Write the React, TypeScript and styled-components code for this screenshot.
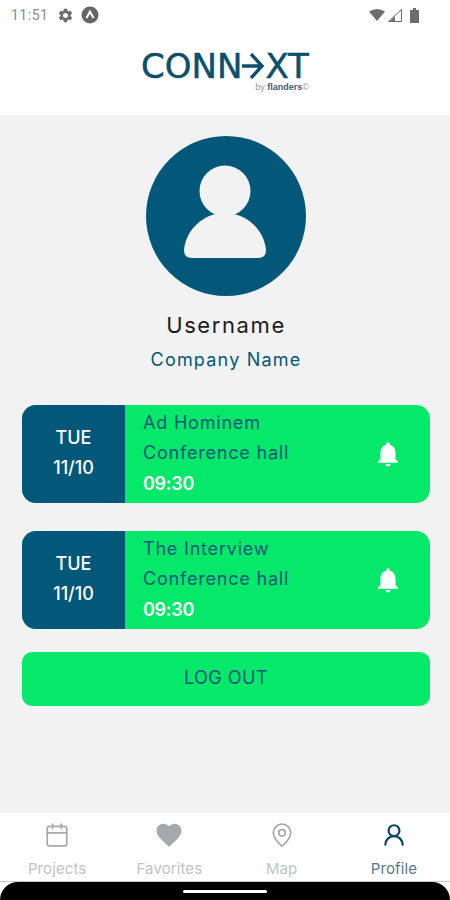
import React from "react";
import styled, { createGlobalStyle } from "styled-components";
import { MdFavorite, MdNotifications, MdSettings } from "react-icons/md";
import { Calendar, MapPin, UserRound } from "lucide-react";

const NAVY = "#03587a";
const GREEN = "#05e869";
const GREY = "#a5a9ab";

const GlobalStyle = createGlobalStyle`
  html, body {
    margin: 0;
    padding: 0;
    background: #fff;
  }
  * {
    box-sizing: border-box;
  }
`;

const Screen = styled.div`
  width: 450px;
  height: 900px;
  display: flex;
  flex-direction: column;
  overflow: hidden;
  background: #fff;
  font-family: Inter, "Open Sans", sans-serif;
`;

const StatusBar = styled.div`
  height: 30px;
  padding: 0 31px 0 11px;
  display: flex;
  align-items: center;
  justify-content: space-between;
  color: #6d6d6d;
`;

const StatusGroup = styled.div<{ $gap: number }>`
  display: flex;
  align-items: center;
  gap: ${(props) => props.$gap}px;
`;

const Clock = styled.span`
  font-family: Roboto, sans-serif;
  font-size: 14px;
  color: #8a8a8a;
  letter-spacing: 0.5px;
  margin-right: 2px;
`;

const WifiIcon = styled.svg`
  margin-right: -5px;
`;

const Header = styled.header`
  height: 85px;
  display: flex;
  flex-direction: column;
  align-items: center;
  padding-top: 21px;
`;

const Logo = styled.div`
  width: 168px;
  display: flex;
  flex-direction: column;
  color: #0a4f6c;
`;

const LogoWord = styled.div`
  display: flex;
  align-items: center;
  height: 30px;
  font-family: "DejaVu Sans", sans-serif;
  font-size: 34px;
  line-height: 30px;
  -webkit-text-stroke: 0.5px #0a4f6c;
`;

const LogoTag = styled.div`
  align-self: flex-end;
  margin-top: 1px;
  font-family: "Liberation Sans", sans-serif;
  font-size: 9px;
  line-height: 10px;
  color: #8a9aa3;

  b {
    color: #3f5d6e;
  }
`;

const Main = styled.main`
  flex: 1;
  background: #f2f2f2;
  padding: 21px 20px 0 22px;
  display: flex;
  flex-direction: column;
`;

const Profile = styled.section`
  display: flex;
  flex-direction: column;
  align-items: center;
  margin-bottom: 33px;
`;

const Avatar = styled.div`
  width: 160px;
  height: 160px;
  border-radius: 50%;
  background: ${NAVY};
  display: flex;
  align-items: center;
  justify-content: center;

  svg {
    margin-bottom: 8px;
  }
`;

const Username = styled.h1`
  margin: 16px 0 0;
  font-size: 22px;
  line-height: 26px;
  font-weight: 400;
  letter-spacing: 1.6px;
  color: #1c1c1c;
`;

const Company = styled.p`
  margin: 10px 0 0;
  font-size: 18px;
  line-height: 24px;
  font-weight: 400;
  letter-spacing: 1.2px;
  color: ${NAVY};
`;

const Card = styled.article`
  height: 98px;
  margin-bottom: 28px;
  border-radius: 14px;
  overflow: hidden;
  background: ${GREEN};
  display: flex;
`;

const DateBox = styled.div`
  width: 103px;
  padding-bottom: 2px;
  background: ${NAVY};
  color: #fff;
  display: flex;
  flex-direction: column;
  align-items: center;
  justify-content: center;
  gap: 8px;
  font-size: 18px;
  line-height: 22px;
  font-weight: 500;
`;

const CardBody = styled.div`
  flex: 1;
  padding: 0 27px 1px 18px;
  display: flex;
  align-items: center;
  justify-content: space-between;

  svg {
    margin-top: 1px;
  }
`;

const CardLines = styled.div`
  display: flex;
  flex-direction: column;
  gap: 8px;
  font-size: 18px;
  line-height: 22.5px;
  letter-spacing: 0.8px;
  color: ${NAVY};
`;

const CardTime = styled.span`
  color: #fff;
  font-weight: 600;
  letter-spacing: -0.3px;
`;

const LogOut = styled.button`
  height: 54px;
  margin-top: -5px;
  padding: 0 0 3px;
  border: 0;
  border-radius: 10px;
  background: ${GREEN};
  color: ${NAVY};
  font-family: inherit;
  font-size: 18px;
  letter-spacing: 0.5px;
`;

const TabBar = styled.nav`
  height: 69px;
  display: grid;
  grid-template-columns: repeat(4, 1fr);
  padding: 0 0 0 1px;
  border-bottom: 1px solid #c8c8c8;
`;

const Tab = styled.div<{ $active?: boolean }>`
  display: flex;
  flex-direction: column;
  align-items: center;
  padding-top: 9px;
  gap: 11px;
  font-size: 15px;
  line-height: 20px;
  letter-spacing: 0.1px;
  color: ${(props) => (props.$active ? "#56788a" : "#c0c3c5")};

  svg {
    color: ${(props) => (props.$active ? "#07476a" : GREY)};
  }
`;

const NavBar = styled.div`
  height: 18px;
  background: #000;
  border-radius: 18px 18px 0 0;
  display: flex;
  align-items: center;
  justify-content: center;
`;

const HomeBar = styled.div`
  width: 84px;
  height: 3px;
  margin-top: 1px;
  border-radius: 2px;
  background: #fff;
`;

const events = [
  { id: 1, title: "Ad Hominem" },
  { id: 2, title: "The Interview" },
];

const tabs = [
  { label: "Projects", icon: <Calendar size={26} strokeWidth={1.6} /> },
  { label: "Favorites", icon: <MdFavorite size={30} style={{ margin: "-2px 0" }} /> },
  { label: "Map", icon: <MapPin size={26} strokeWidth={1.6} /> },
  { label: "Profile", icon: <UserRound size={26} strokeWidth={2} />, active: true },
];

const App: React.FC = () => {
  return (
    <Screen>
      <GlobalStyle />
      <StatusBar>
        <StatusGroup $gap={7}>
          <Clock>11:51</Clock>
          <MdSettings size={17} />
          <svg width="18" height="18" viewBox="0 0 18 18">
            <circle cx="9" cy="9" r="8.5" fill="#666" />
            <path d="M5.5 12 L9 5.5 L12.5 12" fill="none" stroke="#fff" strokeWidth="2" />
          </svg>
        </StatusGroup>
        <StatusGroup $gap={8}>
          <WifiIcon width="16" height="12" viewBox="0 0 16 12">
            <path d="M0 2.5 Q8 -2.5 16 2.5 L8 12 Z" fill="#6d6d6d" />
          </WifiIcon>
          <svg width="14" height="13" viewBox="0 0 14 13">
            <path d="M13.5 0.5 V12.5 H0.5 Z" fill="#fff" stroke="#6d6d6d" />
            <path d="M7 7 V12.5 H1.5 Z" fill="#6d6d6d" />
          </svg>
          <svg width="9" height="15" viewBox="0 0 9 15">
            <path d="M0 2 H3 V0 H6 V2 H9 V15 H0 Z" fill="#6d6d6d" />
          </svg>
        </StatusGroup>
      </StatusBar>

      <Header>
        <Logo>
          <LogoWord>
            <span>CONN</span>
            <svg width="23" height="26" viewBox="0 0 23 26">
              <path
                d="M0 13 H20 M9 1 L20 13 L9 25"
                fill="none"
                stroke="#0a4f6c"
                strokeWidth="3.4"
              />
            </svg>
            <span>XT</span>
          </LogoWord>
          <LogoTag>
            by <b>flanders</b>©
          </LogoTag>
        </Logo>
      </Header>

      <Main>
        <Profile>
          <Avatar>
            <svg width="84" height="94" viewBox="0 0 84 94" fill="#f2f2f2">
              <circle cx="41" cy="26" r="25.5" />
              <path d="M8 93 Q0 93 0 85 C2 64 20 48 41 48 C62 48 80 64 82 85 Q82 93 74 93 Z" />
            </svg>
          </Avatar>
          <Username>Username</Username>
          <Company>Company Name</Company>
        </Profile>

        {events.map((event) => (
          <Card key={event.id}>
            <DateBox>
              <span>TUE</span>
              <span>11/10</span>
            </DateBox>
            <CardBody>
              <CardLines>
                <span>{event.title}</span>
                <span>Conference hall</span>
                <CardTime>09:30</CardTime>
              </CardLines>
              <MdNotifications size={30} color="#fff" />
            </CardBody>
          </Card>
        ))}

        <LogOut>LOG OUT</LogOut>
      </Main>

      <TabBar>
        {tabs.map((tab) => (
          <Tab key={tab.label} $active={tab.active}>
            {tab.icon}
            <span>{tab.label}</span>
          </Tab>
        ))}
      </TabBar>
      <NavBar>
        <HomeBar />
      </NavBar>
    </Screen>
  );
};

export default App;
